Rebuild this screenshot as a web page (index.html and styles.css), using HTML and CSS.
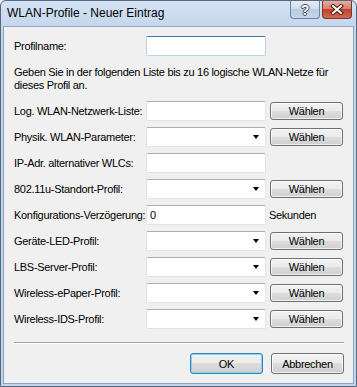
FILE: index.html
```html
<!DOCTYPE html>
<html lang="de">
<head>
    <meta charset="UTF-8">
    <meta name="viewport" content="width=device-width, initial-scale=1.0">
    <title>WLAN-Profile - Neuer Eintrag</title>
    <link rel="stylesheet" href="styles.css">
</head>
<body>
    <div class="window">
        <div class="titlebar">
            <span class="title">WLAN-Profile - Neuer Eintrag</span>
            <div class="caption-buttons">
                <button class="cap-btn help-btn">?</button>
                <button class="cap-btn close-btn">
                    <svg width="14" height="11" viewBox="0 0 14 11">
                        <path d="M3 2 L11 9 M11 2 L3 9" stroke="#4a1a12" stroke-width="4" stroke-linecap="square" fill="none"/>
                        <path d="M3 2 L11 9 M11 2 L3 9" stroke="#fff" stroke-width="2" stroke-linecap="square" fill="none"/>
                    </svg>
                </button>
            </div>
        </div>

        <div class="client">
            <div class="row">
                <label>Profilname:</label>
                <input type="text" class="field focused">
            </div>

            <p class="hint">Geben Sie in der folgenden Liste bis zu 16 logische WLAN-Netze für<br>dieses Profil an.</p>

            <div class="rows">
                <div class="row">
                    <label>Log. WLAN-Netzwerk-Liste:</label>
                    <input type="text" class="field">
                    <button class="btn choose-btn">Wählen</button>
                </div>
                <div class="row">
                    <label>Physik. WLAN-Parameter:</label>
                    <div class="field combo"><span class="arrow"></span></div>
                    <button class="btn choose-btn">Wählen</button>
                </div>
                <div class="row">
                    <label>IP-Adr. alternativer WLCs:</label>
                    <input type="text" class="field">
                </div>
                <div class="row">
                    <label>802.11u-Standort-Profil:</label>
                    <div class="field combo"><span class="arrow"></span></div>
                    <button class="btn choose-btn">Wählen</button>
                </div>
                <div class="row">
                    <label>Konfigurations-Verzögerung:</label>
                    <input type="text" class="field" value="0">
                    <span class="unit">Sekunden</span>
                </div>
                <div class="row">
                    <label>Geräte-LED-Profil:</label>
                    <div class="field combo"><span class="arrow"></span></div>
                    <button class="btn choose-btn">Wählen</button>
                </div>
                <div class="row">
                    <label>LBS-Server-Profil:</label>
                    <div class="field combo"><span class="arrow"></span></div>
                    <button class="btn choose-btn">Wählen</button>
                </div>
                <div class="row">
                    <label>Wireless-ePaper-Profil:</label>
                    <div class="field combo"><span class="arrow"></span></div>
                    <button class="btn choose-btn">Wählen</button>
                </div>
                <div class="row">
                    <label>Wireless-IDS-Profil:</label>
                    <div class="field combo"><span class="arrow"></span></div>
                    <button class="btn choose-btn">Wählen</button>
                </div>
            </div>

            <div class="separator"></div>

            <div class="actions">
                <button class="btn action-btn default">OK</button>
                <button class="btn action-btn">Abbrechen</button>
            </div>
        </div>
    </div>
</body>
</html>
```

FILE: styles.css
```css
* {
    margin: 0;
    padding: 0;
    box-sizing: border-box;
}

body {
    font-family: "Liberation Sans", Arial, sans-serif;
    font-size: 11px;
    letter-spacing: -0.3px;
    color: #000;
    background: #f0f0f0;
}

.window {
    width: 357px;
    height: 387px;
    border: 1px solid #56687d;
    border-radius: 6px 6px 0 0;
    background: linear-gradient(#d4e2f3, #c2d5ed 30px, #c2d5ed);
    padding: 0 2px 2px;
    display: flex;
    flex-direction: column;
}

.titlebar {
    height: 25px;
    display: flex;
    justify-content: space-between;
    align-items: flex-start;
}

.title {
    font-size: 12px;
    letter-spacing: 0;
    line-height: 25px;
    padding-left: 4px;
}

.caption-buttons {
    display: flex;
    gap: 2px;
    margin-right: 2px;
}

.cap-btn {
    width: 30px;
    height: 18px;
    border-radius: 0 0 4px 4px;
    display: flex;
    align-items: center;
    justify-content: center;
    font-family: "Liberation Sans", Arial, sans-serif;
}

.help-btn {
    border: 1px solid #6f8098;
    border-top: none;
    background: linear-gradient(#e4ecf6, #cfdcec 50%, #b8cbe3 50%, #c6d6ea);
    color: #fff;
    font-size: 14px;
    font-weight: bold;
    text-shadow: -1px 0 #3d4c60, 1px 0 #3d4c60, 0 -1px #3d4c60, 0 1px #3d4c60;
}

.close-btn {
    border: 1px solid #7d3528;
    border-top: none;
    background: linear-gradient(#e8ab9d, #d47c68 50%, #c1432d 50%, #d2694f);
}

.client {
    flex: 1;
    background: #f0f0f0;
    border: 1px solid #8ea4be;
    padding: 9px 9px 0 10px;
    display: flex;
    flex-direction: column;
}

.row {
    display: flex;
    align-items: center;
    height: 20px;
}

.row label {
    width: 132px;
    white-space: nowrap;
}

.field {
    width: 120px;
    height: 20px;
    background: #fff;
    border: 1px solid #e2e3ea;
    border-top-color: #abadb3;
    border-radius: 2px;
    font-family: "Liberation Sans", Arial, sans-serif;
    font-size: 11px;
    padding: 0 3px;
    outline: none;
}

.field.focused {
    border-color: #b5d3ec;
    border-top-color: #3d7bad;
}

.combo {
    display: flex;
    align-items: center;
    justify-content: flex-end;
    padding-right: 6px;
}

.arrow {
    width: 0;
    height: 0;
    border-left: 3.5px solid transparent;
    border-right: 3.5px solid transparent;
    border-top: 4px solid #000;
}

.hint {
    line-height: 13px;
    margin: 10px 0 9px;
}

.rows {
    display: flex;
    flex-direction: column;
    gap: 6px;
}

.btn {
    border: 1px solid #707070;
    border-radius: 3px;
    background: linear-gradient(#f2f2f2, #ebebeb 50%, #dddddd 50%, #cfcfcf);
    box-shadow: inset 0 0 0 1px rgba(255, 255, 255, 0.7);
    font-family: "Liberation Sans", Arial, sans-serif;
    font-size: 11px;
    letter-spacing: -0.3px;
    color: #000;
}

.choose-btn {
    width: 73px;
    height: 18px;
    margin-left: 4px;
}

.unit {
    margin-left: 3px;
}

.separator {
    margin-top: 13px;
    border-top: 1px solid #a0a0a0;
    border-bottom: 1px solid #fff;
}

.actions {
    display: flex;
    justify-content: flex-end;
    gap: 8px;
    margin-top: 9px;
}

.action-btn {
    width: 73px;
    height: 21px;
}

.action-btn.default {
    border-color: #3c7fb1;
    box-shadow: inset 0 0 0 1px #7fd6f7;
}
```
